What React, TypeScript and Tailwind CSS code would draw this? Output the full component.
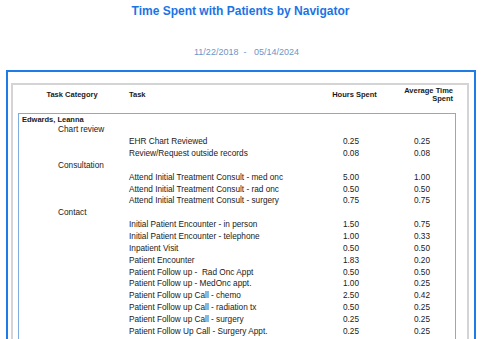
const groups = [
  {
    category: 'Chart review',
    tasks: [
      { task: 'EHR Chart Reviewed', hours: '0.25', avg: '0.25' },
      { task: 'Review/Request outside records', hours: '0.08', avg: '0.08' },
    ],
  },
  {
    category: 'Consultation',
    tasks: [
      { task: 'Attend Initial Treatment Consult - med onc', hours: '5.00', avg: '1.00' },
      { task: 'Attend Initial Treatment Consult - rad onc', hours: '0.50', avg: '0.50' },
      { task: 'Attend Initial Treatment Consult - surgery', hours: '0.75', avg: '0.75' },
    ],
  },
  {
    category: 'Contact',
    tasks: [
      { task: 'Initial Patient Encounter - in person', hours: '1.50', avg: '0.75' },
      { task: 'Initial Patient Encounter - telephone', hours: '1.00', avg: '0.33' },
      { task: 'Inpatient Visit', hours: '0.50', avg: '0.50' },
      { task: 'Patient Encounter', hours: '1.83', avg: '0.20' },
      { task: 'Patient Follow up -  Rad Onc Appt', hours: '0.50', avg: '0.50' },
      { task: 'Patient Follow up - MedOnc appt.', hours: '1.00', avg: '0.25' },
      { task: 'Patient Follow up Call - chemo', hours: '2.50', avg: '0.42' },
      { task: 'Patient Follow up Call - radiation tx', hours: '0.50', avg: '0.25' },
      { task: 'Patient Follow up Call - surgery', hours: '0.25', avg: '0.25' },
      { task: 'Patient Follow Up Call - Surgery Appt.', hours: '0.25', avg: '0.25' },
    ],
  },
];

export default function App() {
  return (
    <div className="h-[339px] w-[485px] overflow-hidden bg-white pt-[4px] font-['Liberation_Sans',Arial,sans-serif]">
      <h1 className="h-[14px] pr-[4px] text-center text-[12px] font-bold leading-[14px] text-[#1b74e4]">
        Time Spent with Patients by Navigator
      </h1>
      <div className="mt-[29px] h-[11px] whitespace-pre pl-[8px] text-center text-[9px] leading-[11px] text-[#6f94c8]">
        {'11/22/2018  -   05/14/2024'}
      </div>

      {/* report frame */}
      <div className="ml-[6px] mt-[12px] h-[400px] w-[470px] border-2 border-[#1e7ce6] pl-[3px] pr-[5px] pt-[11px]">
        <div className="h-[380px] w-[458px] border-2 border-[#d4d4d4] bg-white">
          {/* column headers */}
          <div className="flex h-[20px] items-center text-[7.5px] font-bold text-[#1a1a1a]">
            <div className="ml-[6px] w-[106px] text-center leading-[8px]">Task Category</div>
            <div className="ml-[4px] w-[201px] leading-[8px]">Task</div>
            <div className="w-[49px] text-center leading-[8px]">Hours Spent</div>
            <div className="w-[74px] text-right leading-[8px]">
              <div>Average Time</div>
              <div>Spent</div>
            </div>
          </div>

          <div className="ml-[5px] mt-[8px] h-[300px] w-[438px] border border-[#7eaee0] pt-[2px] text-[8.25px] text-[#1a1a1a]">
            <div className="h-[8px] pl-[3px] text-[7.5px] font-bold leading-[8px]">Edwards, Leanna</div>
            {groups.map((g) => (
              <div key={g.category}>
                <div className="h-[12px] pl-[39px] leading-[12px]">{g.category}</div>
                {g.tasks.map((t) => (
                  <div key={t.task} className="flex h-[11.85px] whitespace-pre leading-[11.85px]">
                    <div className="w-[110px]" />
                    <div className="w-[201px]">{t.task}</div>
                    <div className="w-[42px] text-center">{t.hours}</div>
                    <div className="w-[28px]" />
                    <div className="w-[44px] text-center">{t.avg}</div>
                  </div>
                ))}
              </div>
            ))}
          </div>
        </div>
      </div>
    </div>
  );
}
